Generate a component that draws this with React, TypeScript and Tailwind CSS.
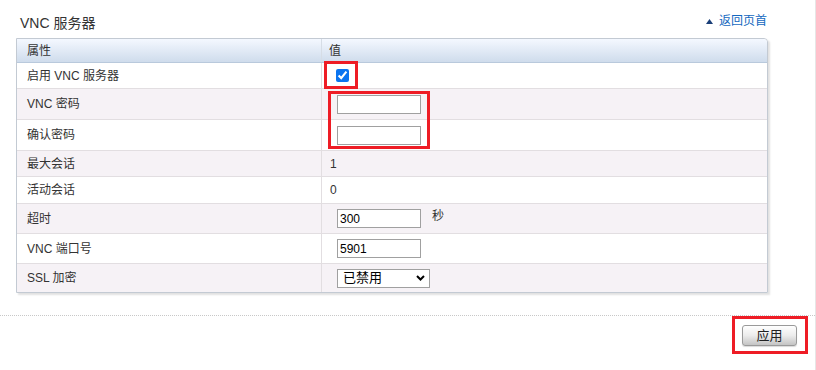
import React from "react";

const font = "font-['Liberation_Sans','Noto_Sans_CJK_SC',sans-serif]";

const Field = ({ value = "", w = "w-[84px]" }: { value?: string; w?: string }) => (
  <input
    readOnly
    value={value}
    className={`${w} ml-[6px] h-[19px] border border-[#a0a0a0] bg-white px-[2px] text-[12px] text-black outline-none`}
  />
);

const Row = ({
  label,
  h,
  alt,
  last,
  children,
}: {
  label: string;
  h: string;
  alt?: boolean;
  last?: boolean;
  children?: React.ReactNode;
}) => (
  <div
    className={`flex ${h} ${alt ? "bg-[#f6f2f6]" : "bg-white"} ${
      last ? "" : "border-b border-[#e2dee1]"
    }`}
  >
    <div className="flex w-[305px] items-center border-r border-[#e2dee1] pl-[10px]">{label}</div>
    <div className="flex flex-1 items-center pl-[9px]">{children}</div>
  </div>
);

export default function App() {
  return (
    <div
      className={`relative h-[370px] w-[816px] overflow-hidden border-r border-[#e6e6e6] bg-white text-[12px] text-[#333] ${font}`}
    >
      <div className="flex h-[38px] items-start justify-between pl-[20px] pr-[48px]">
        <h2 className="pt-[14px] text-[14px] leading-[18px] text-[#333]">VNC 服务器</h2>
        <a className="flex items-center gap-[6px] pt-[14px] leading-[14px] text-[#1468c0]">
          <svg width="7" height="5" viewBox="0 0 7 5">
            <path d="M3.5 0 L7 5 L0 5 Z" fill="#1b3f78" />
          </svg>
          返回页首
        </a>
      </div>

      <div className="ml-[16px] w-[752px] rounded-tr-[4px] border border-[#c3cad3] shadow-[2px_2px_2px_rgba(0,0,0,0.12)]">
        <div className="flex h-[24px] rounded-tr-[4px] border-b border-[#b9c9dc] bg-gradient-to-b from-[#f4f8ff] to-[#cfdcec]">
          <div className="flex w-[305px] items-center border-r border-[#d6dde6] pl-[10px]">属性</div>
          <div className="flex flex-1 items-center pl-[7px]">值</div>
        </div>
        <Row label="启用 VNC 服务器" h="h-[26px]">
          <input
            type="checkbox"
            defaultChecked
            className="ml-[5px] h-[13px] w-[13px] accent-[#0a74f0]"
          />
        </Row>
        <Row label="VNC 密码" h="h-[31px]" alt>
          <Field />
        </Row>
        <Row label="确认密码" h="h-[31px]">
          <Field />
        </Row>
        <Row label="最大会话" h="h-[26px]" alt>
          <span className="-ml-[1px]">1</span>
        </Row>
        <Row label="活动会话" h="h-[27px]">
          <span className="-ml-[1px]">0</span>
        </Row>
        <Row label="超时" h="h-[30px]" alt>
          <Field value="300" />
          <span className="mb-[6px] ml-[11px]">秒</span>
        </Row>
        <Row label="VNC 端口号" h="h-[30px]">
          <Field value="5901" />
        </Row>
        <Row label="SSL 加密" h="h-[28px]" alt last>
          <div className="ml-[6px] flex h-[19px] w-[93px] items-center justify-between border border-[#a0a0a0] bg-white pl-[5px] pr-[4px] text-[13px] text-black">
            已禁用
            <svg width="9" height="6" viewBox="0 0 9 6">
              <path d="M1 1 L4.5 4.5 L8 1" fill="none" stroke="#000" strokeWidth="2" />
            </svg>
          </div>
        </Row>
      </div>

      <div className="mt-[22px] border-t border-dotted border-[#c8c8c8]" />

      <div className="flex justify-end pr-[18px] pt-[9px]">
        <button className="h-[21px] w-[55px] rounded-[3px] border border-[#9a9a9a] bg-gradient-to-b from-[#ffffff] via-[#ececec] to-[#c4c4c4] text-[13px] text-[#222] shadow-[0_1px_1px_rgba(0,0,0,0.15)]">
          应用
        </button>
      </div>

      <div className="pointer-events-none absolute left-[324px] top-[61px] h-[28px] w-[34px] border-[3px] border-[#ee1c25]" />
      <div className="pointer-events-none absolute left-[328px] top-[91px] h-[58px] w-[102px] border-[3px] border-[#ee1c25]" />
      <div className="pointer-events-none absolute left-[732px] top-[316px] h-[38px] w-[76px] border-[3px] border-[#ee1c25]" />
    </div>
  );
}
